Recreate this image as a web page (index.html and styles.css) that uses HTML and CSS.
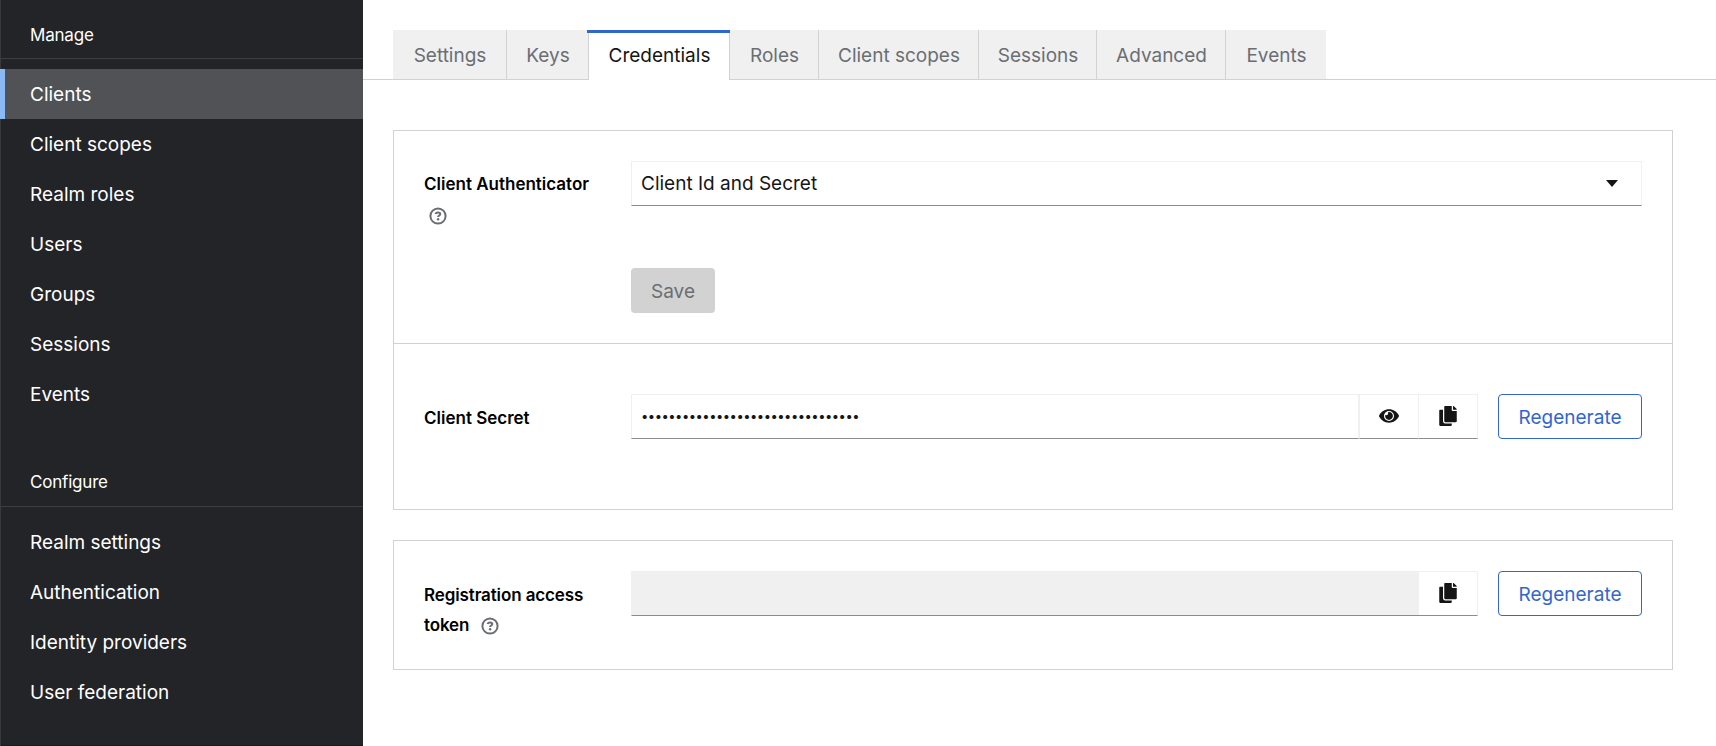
FILE: index.html
```html
<!DOCTYPE html>
<html lang="en">
<head>
    <meta charset="UTF-8">
    <meta name="viewport" content="width=device-width, initial-scale=1.0">
    <title>Client details</title>
    <link rel="stylesheet" href="styles.css">
</head>
<body>

<svg class="sprite" width="0" height="0">
    <symbol id="copy" viewBox="0 0 448 512">
        <path d="M320 448v40c0 13.255-10.745 24-24 24H24c-13.255 0-24-10.745-24-24V120c0-13.255 10.745-24 24-24h72v296c0 30.879 25.121 56 56 56h168zm0-344V0H152c-13.255 0-24 10.745-24 24v368c0 13.255 10.745 24 24 24h272c13.255 0 24-10.745 24-24V128H344c-13.2 0-24-10.8-24-24zm120.971-31.029L375.029 7.029A24 24 0 0 0 358.059 0H352v96h96v-6.059a24 24 0 0 0-7.029-16.97z"/>
    </symbol>
    <symbol id="eye" viewBox="0 0 576 512">
        <path d="M288 144a110.94 110.94 0 0 0-31.24 5 55.4 55.4 0 0 1 7.24 27 56 56 0 0 1-56 56 55.4 55.4 0 0 1-27-7.24A111.71 111.71 0 1 0 288 144zm284.52 97.4C518.29 135.59 410.93 64 288 64S57.68 135.64 3.48 241.41a32.35 32.35 0 0 0 0 29.19C57.71 376.41 165.07 448 288 448s230.32-71.64 284.52-177.41a32.35 32.35 0 0 0 0-29.19zM288 400a144 144 0 1 1 144-144 143.93 143.93 0 0 1-144 144z"/>
    </symbol>
    <symbol id="help" viewBox="0 0 18 18">
        <circle cx="9" cy="9" r="7.6" fill="none" stroke="currentColor" stroke-width="2"/>
        <path d="M6.500 7C6.900 5.900 7.900 5.500 9 5.500c1.400 0 2.300.6 2.300 1.600 0 1.400-2.200 1.400-2.200 2.900" fill="none" stroke="currentColor" stroke-width="2"/>
        <circle cx="9.100" cy="12.300" r="1.200"/>
    </symbol>
</svg>

<div class="page">
    <nav class="sidebar">
        <section class="nav-section">
            <h2 class="nav-title">Manage</h2>
            <a class="nav-link current">Clients</a>
            <a class="nav-link">Client scopes</a>
            <a class="nav-link">Realm roles</a>
            <a class="nav-link">Users</a>
            <a class="nav-link">Groups</a>
            <a class="nav-link">Sessions</a>
            <a class="nav-link">Events</a>
        </section>
        <section class="nav-section">
            <h2 class="nav-title">Configure</h2>
            <a class="nav-link">Realm settings</a>
            <a class="nav-link">Authentication</a>
            <a class="nav-link">Identity providers</a>
            <a class="nav-link">User federation</a>
        </section>
    </nav>

    <main class="main">
        <div class="tabs">
            <button class="tab tab-settings">Settings</button>
            <button class="tab tab-keys">Keys</button>
            <button class="tab tab-credentials active">Credentials</button>
            <button class="tab tab-roles">Roles</button>
            <button class="tab tab-scopes">Client scopes</button>
            <button class="tab tab-sessions">Sessions</button>
            <button class="tab tab-advanced">Advanced</button>
            <button class="tab tab-events">Events</button>
        </div>

        <div class="card">
            <div class="card-body authenticator">
                <div class="form-row">
                    <label class="label">Client Authenticator <svg class="help"><use href="#help"/></svg></label>
                    <button class="select">Client Id and Secret<span class="caret"></span></button>
                </div>
                <button class="button save" disabled>Save</button>
            </div>
            <div class="card-body secret">
                <div class="form-row">
                    <label class="label">Client Secret</label>
                    <div class="input-group">
                        <div class="input dots">••••••••••••••••••••••••••••••••</div>
                        <button class="control toggle"><svg class="eye"><use href="#eye"/></svg></button>
                        <button class="control"><svg class="copy"><use href="#copy"/></svg></button>
                    </div>
                    <button class="button secondary">Regenerate</button>
                </div>
            </div>
        </div>

        <div class="card">
            <div class="card-body token">
                <div class="form-row">
                    <label class="label">Registration access token <svg class="help"><use href="#help"/></svg></label>
                    <div class="input-group">
                        <div class="input readonly"></div>
                        <button class="control"><svg class="copy"><use href="#copy"/></svg></button>
                    </div>
                    <button class="button secondary">Regenerate</button>
                </div>
            </div>
        </div>
    </main>
</div>

</body>
</html>
```
FILE: styles.css
```css
* {
    box-sizing: border-box;
}

body {
    margin: 0;
    font-family: Inter, "Liberation Sans", sans-serif;
    font-size: 19px;
    color: #151515;
    background-color: #fff;
}

button {
    font: inherit;
    letter-spacing: inherit;
    color: inherit;
    padding: 0;
    border: none;
    background: none;
}

svg {
    fill: currentColor;
}

.sprite {
    position: absolute;
}

.page {
    display: flex;
    height: 746px;
    overflow: hidden;
}

/* sidebar */
.sidebar {
    display: flex;
    flex-direction: column;
    gap: 46px;
    width: 363px;
    padding-top: 18px;
    background-color: #232428;
    color: #fff;
    box-shadow: inset 1px 0 #38393d, inset 0 -1px #1a1a1d;
}

.nav-title {
    height: 41px;
    margin: 0 0 10px;
    padding-left: 30px;
    border-bottom: 1px solid #3c3f42;
    font-size: 17px;
    font-weight: 400;
    letter-spacing: -0.2px;
    line-height: 34px;
}

.nav-section + .nav-section .nav-title {
    height: 42px;
}

.nav-link {
    display: block;
    height: 50px;
    padding-left: 30px;
    line-height: 52px;
}

.nav-link.current {
    padding-left: 25px;
    border-left: 5px solid #8bb9f4;
    background-color: #515256;
}

/* tabs */
.main {
    flex: 1;
    padding-top: 30px;
}

.tabs {
    display: flex;
    height: 50px;
    padding-left: 30px;
    border-bottom: 1px solid #d2d2d2;
    color: #6a6e73;
}

.tab {
    height: 49px;
    padding: 2px 0 0 1px;
    border-right: 1px solid #d2d2d2;
    background-color: #f0f0f0;
}

.tab.active {
    position: relative;
    height: 50px;
    padding-top: 1px;
    background-color: #fff;
    color: #151515;
}

.tab.active::before {
    content: "";
    position: absolute;
    top: 0;
    left: -2px;
    right: -1px;
    height: 3px;
    background-color: #3366cc;
}

.tab-settings { width: 114px; }
.tab-keys { width: 82px; }
.tab-credentials { width: 141px; }
.tab-roles { width: 89px; }
.tab-scopes { width: 160px; }
.tab-sessions { width: 118px; }
.tab-advanced { width: 129px; }
.tab-events { width: 100px; border-right: none; }

/* cards */
.card {
    width: 1280px;
    margin: 50px 0 0 30px;
    border: 1px solid #d2d2d2;
}

.card + .card {
    margin-top: 30px;
}

.card-body {
    padding: 30px;
}

.authenticator {
    height: 213px;
    border-bottom: 1px solid #d2d2d2;
}

.secret {
    height: 165px;
    padding-top: 50px;
}

.token {
    height: 128px;
}

.form-row {
    display: flex;
    height: 45px;
}

.label {
    width: 182px;
    margin-right: 25px;
    padding-top: 9px;
    flex: none;
    color: #000;
    font-size: 17px;
    font-weight: 600;
    line-height: 30px;
}

.authenticator .label {
    padding-top: 8px;
}

.token .label {
    letter-spacing: -0.12px;
}

.help {
    width: 18px;
    height: 18px;
    margin-left: 5px;
    vertical-align: -4px;
    color: #6a6e73;
}

.authenticator .help {
    vertical-align: -5px;
}

.token .help {
    margin-left: 7px;
}

.select,
.input,
.control {
    height: 45px;
    border: 1px solid #f0f0f0;
    border-bottom-color: #8a8d90;
}

.select {
    display: flex;
    flex: 1;
    justify-content: space-between;
    align-items: center;
    padding: 0 23px 0 9px;
}

.caret {
    border: 6px solid transparent;
    border-top: 7px solid #151515;
    border-bottom: none;
}

.input-group {
    display: flex;
    flex: 1;
}

.input {
    flex: 1;
    padding-left: 9px;
    line-height: 43px;
}

.dots {
    font-size: 13px;
    letter-spacing: -0.5px;
}

.readonly {
    background-color: #f0f0f0;
    border-right: none;
}

.control {
    display: flex;
    justify-content: center;
    align-items: center;
    width: 59px;
    padding-bottom: 1px;
    border-left: none;
}

.toggle {
    width: 60px;
    border-left: 1px solid #f0f0f0;
}

.eye {
    width: 20px;
    height: 20px;
}

.copy {
    width: 18px;
    height: 20px;
}

.button {
    height: 45px;
    border-radius: 4px;
}

.save {
    display: block;
    width: 84px;
    margin: 62px 0 0 207px;
    padding-top: 2px;
    background-color: #d2d2d2;
    color: #6a6e73;
}

.secondary {
    width: 144px;
    margin-left: 20px;
    padding-top: 2px;
    border: 1px solid #3366cc;
    color: #3366cc;
}
```
